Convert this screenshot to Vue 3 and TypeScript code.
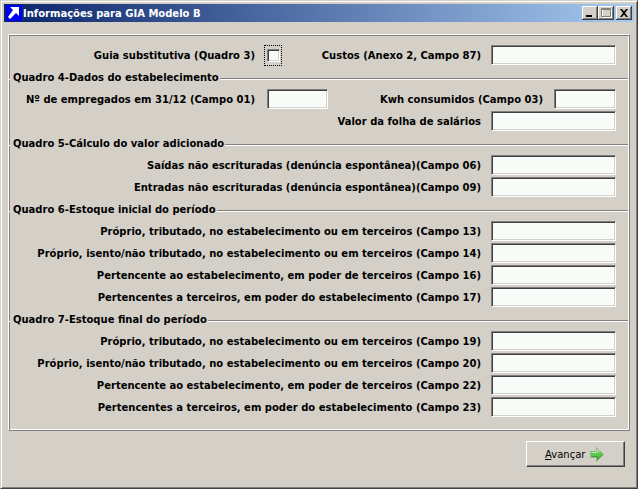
<script setup lang="ts">
const sections: { title: string; rows: string[] }[] = [
  { title: 'Quadro 5-Cálculo do valor adicionado', rows: ['Saídas não escrituradas (denúncia espontânea)(Campo 06)', 'Entradas não escrituradas (denúncia espontânea)(Campo 09)'] },
  { title: 'Quadro 6-Estoque inicial do período', rows: ['Próprio, tributado, no estabelecimento ou em terceiros (Campo 13)', 'Próprio, isento/não tributado, no estabelecimento ou em terceiros (Campo 14)', 'Pertencente ao estabelecimento, em poder de terceiros (Campo 16)', 'Pertencentes a terceiros, em poder do estabelecimento (Campo 17)'] },
  { title: 'Quadro 7-Estoque final do período', rows: ['Próprio, tributado, no estabelecimento ou em terceiros (Campo 19)', 'Próprio, isento/não tributado, no estabelecimento ou em terceiros (Campo 20)', 'Pertencente ao estabelecimento, em poder de terceiros (Campo 22)', 'Pertencentes a terceiros, em poder do estabelecimento (Campo 23)'] },
]
</script>

<template>
  <div class="window">
    <div class="titlebar">
      <svg class="appicon" width="16" height="16" viewBox="0 0 16 16">
        <rect width="16" height="16" fill="#0000f0" />
        <path d="M2 12 L4 14 L10 8 L13 11 L13 2 L4 2 L7 5 Z" fill="#fff" />
      </svg>
      <span class="title">Informações para GIA Modelo B</span>
      <div class="caps">
        <span class="cap">
          <svg width="16" height="14" viewBox="0 0 16 14"><rect x="4" y="9" width="6" height="2" fill="#000" /></svg>
        </span>
        <span class="cap">
          <svg width="16" height="14" viewBox="0 0 16 14">
            <path d="M4.5 3.5h9v8h-9z" fill="none" stroke="#fff" />
            <path d="M3.5 2.5h9v8h-9z M3 3.5h9" fill="none" stroke="#808080" />
          </svg>
        </span>
        <span class="cap capx">
          <svg width="16" height="14" viewBox="0 0 16 14"><path d="M4 3h2l2 2.5L10 3h2L9 7l3 4h-2L8 8.5 6 11H4l3-4z" fill="#000" /></svg>
        </span>
      </div>
    </div>
    <div class="panel">
      <div class="row">
        <span class="label lead guia">Guia substitutiva (Quadro 3)</span>
        <span class="check"><span class="box"></span></span>
        <span class="label grow">Custos (Anexo 2, Campo 87)</span>
        <span class="input wide"></span>
      </div>
      <section>
        <h3 class="legend"><span>Quadro 4-Dados do estabelecimento</span></h3>
        <div class="row">
          <span class="label lead emp">Nº de empregados em 31/12 (Campo 01)</span>
          <span class="input small"></span>
          <span class="label grow kwh">Kwh consumidos (Campo 03)</span>
          <span class="input tiny"></span>
        </div>
        <div class="row">
          <span class="label grow">Valor da folha de salários</span>
          <span class="input wide"></span>
        </div>
      </section>
      <section v-for="s in sections" :key="s.title">
        <h3 class="legend"><span>{{ s.title }}</span></h3>
        <div v-for="r in s.rows" :key="r" class="row">
          <span class="label grow">{{ r }}</span>
          <span class="input wide"></span>
        </div>
      </section>
    </div>
    <div class="footer">
      <button class="btn" type="button">
        <span><u>A</u>vançar</span>
        <svg class="arrow" width="14" height="15" viewBox="0 0 14 15">
          <path d="M0.5 4.5 H6.5 V0.5 L13.5 7.5 L6.5 14.5 V10.5 H0.5 Z" fill="#5cc84c" stroke="#8fb487" />
          <path d="M1.5 5.5 H7.5 V2.5 L10 5" fill="none" stroke="#bdeaae" />
          <path d="M2 9.5 H7.5 V12.5 L12 7.5" fill="none" stroke="#3f9c38" />
        </svg>
      </button>
    </div>
  </div>
</template>

<style>
html, body { margin: 0; background: #d4d0c8; }
</style>

<style scoped>
.window {
  width: 638px;
  height: 489px;
  box-sizing: border-box;
  background: #d4d0c8;
  border: 1px solid;
  border-color: #d4d0c8 #404040 #404040 #d4d0c8;
  box-shadow: inset 1px 1px 0 #fff, inset -1px -1px 0 #808080;
  padding: 3px;
  display: flex;
  flex-direction: column;
  overflow: hidden;
  font-family: "DejaVu Sans", sans-serif;
  color: #000;
}
.titlebar {
  height: 18px;
  flex: none;
  display: flex;
  align-items: center;
  padding: 0 2px;
  background: linear-gradient(90deg, #0a246a, #a6caf0);
}
.appicon { flex: none; margin-right: 1px; }
.title {
  color: #fff;
  font-weight: 700;
  font-size: 10px;
  white-space: nowrap;
}
.caps { margin-left: auto; display: flex; }
.cap {
  width: 16px;
  height: 14px;
  background: #d4d0c8;
  box-shadow: inset -1px -1px 0 #404040, inset 1px 1px 0 #fff, inset -2px -2px 0 #808080;
  display: block;
}
.cap svg { display: block; }
.capx { margin-left: 2px; }
.panel {
  margin: 12px 0 0 4px;
  width: 622px;
  height: 397px;
  box-sizing: border-box;
  border: 1px solid;
  border-color: #fff #808080 #808080 #fff;
  box-shadow: inset 1px 1px 0 #808080, inset -1px -1px 0 #fff;
  padding-top: 10px;
  flex: none;
}
.row {
  height: 20px;
  margin-bottom: 2px;
  display: flex;
  align-items: center;
  padding-right: 13px;
}
.label {
  font-size: 10px;
  font-weight: 700;
  white-space: nowrap;
  text-align: right;
}
.grow { flex: 1; margin-right: 10px; }
.lead { width: 246px; flex: none; }
.guia { margin-right: 9px; }
.emp { margin-right: 12px; }
.kwh { margin-right: 11px; }
.legend {
  margin: 0;
  height: 22px;
  padding-bottom: 2px;
  box-sizing: border-box;
  font-size: 10px;
  font-weight: 700;
  position: relative;
  display: flex;
  align-items: center;
}
.legend::before {
  content: "";
  position: absolute;
  left: 0;
  right: 1px;
  top: 11px;
  height: 1px;
  background: #808080;
  border-bottom: 1px solid #fff;
}
.legend span { background: #d4d0c8; position: relative; padding: 0 1px 0 3px; margin-left: 1px; }
.input {
  display: block;
  height: 20px;
  box-sizing: border-box;
  background: #f8fcf8;
  border: 1px solid;
  border-color: #808080 #fff #fff #808080;
  box-shadow: inset 1px 1px 0 #404040, inset -1px -1px 0 #d4d0c8;
  flex: none;
}
.wide { width: 125px; }
.small { width: 61px; }
.tiny { width: 62px; }
.check {
  width: 18px;
  height: 21px;
  box-sizing: border-box;
  border: 1px dotted #000;
  display: flex;
  align-items: center;
  justify-content: center;
  flex: none;
}
.box {
  width: 13px;
  height: 13px;
  box-sizing: border-box;
  background: #f8fcf8;
  border: 1px solid;
  border-color: #808080 #fff #fff #808080;
  box-shadow: inset 1px 1px 0 #404040, inset -1px -1px 0 #d4d0c8;
}
.footer {
  flex: 1;
  display: flex;
  justify-content: flex-end;
  align-items: flex-start;
  padding: 10px 9px 0 0;
}
.btn {
  width: 99px;
  height: 26px;
  box-sizing: border-box;
  background: #d4d0c8;
  border: 1px solid;
  border-color: #fff #404040 #404040 #fff;
  box-shadow: inset -1px -1px 0 #808080;
  display: flex;
  align-items: center;
  gap: 5px;
  padding: 0 0 0 18px;
  font: 10px "DejaVu Sans", sans-serif;
  color: #000;
}
.arrow { flex: none; }
</style>
